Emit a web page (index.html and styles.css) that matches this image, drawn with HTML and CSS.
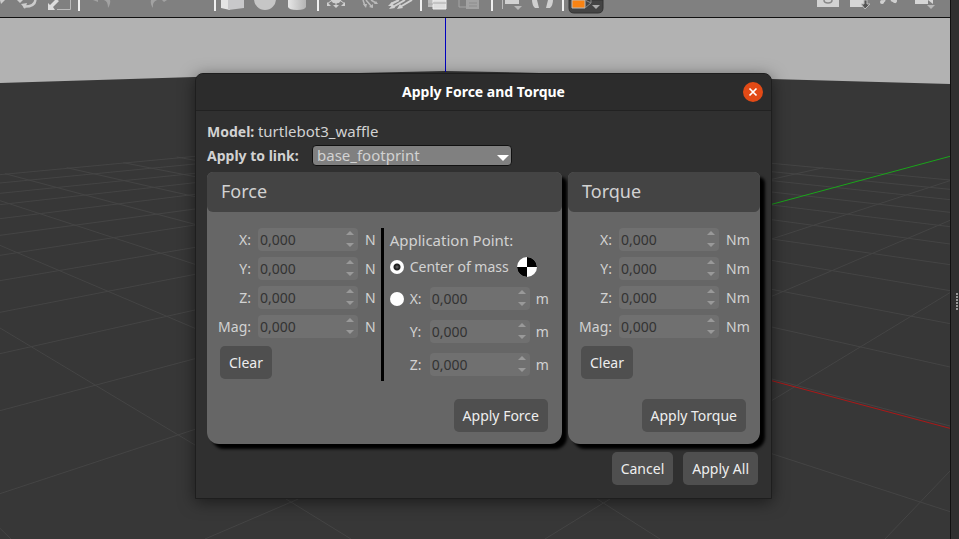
FILE: index.html
```html
<!DOCTYPE html>
<html lang="en">
<head>
<meta charset="utf-8">
<title>Apply Force and Torque</title>
<link rel="stylesheet" href="styles.css">
</head>
<body>
<main class="workspace">
  <div class="toolbar" role="toolbar">
    <div class="group">
      <button class="tool tool-cut" aria-label="Translate"><svg viewBox="0 0 12 17"><path d="M0 0h5l-4 4z" fill="#ccc"/></svg></button>
      <button class="tool" aria-label="Rotate"><svg viewBox="0 0 32 17"><path d="M5 0l3 3 3-3" fill="#ccc"/><path d="M23.500 0q-1 7-12 6.500" fill="none" stroke="#ccc" stroke-width="2.500"/><path d="M9 4l6-1-2 6z" fill="#ccc"/></svg></button>
      <button class="tool" aria-label="Scale"><svg viewBox="0 0 32 17"><path d="M26.500 0v9.500H13" fill="none" stroke="#bbb"/><path d="M4 10V3l2 2 6-6 3 2-6 6 2 3z" fill="#ddd"/></svg></button>
    </div>
    <div class="group history">
      <button class="tool" aria-label="Undo"><svg viewBox="0 0 32 17"><path d="M7 0h5v2zM18 0q4 1 4 8 3-5 2-8z" fill="#a2a2a2"/></svg></button>
      <button class="tool" aria-label="Redo"><svg viewBox="0 0 32 17"><path d="M7 0q-1 4 2 8-1-6 4-8zM18 0h5l-3 2z" fill="#a2a2a2"/></svg></button>
    </div>
    <div class="group">
      <button class="tool" aria-label="Box"><svg viewBox="0 0 32 17"><path d="M4 0h9v10l-9-2z" fill="#e4e4e4"/><path d="M11 0h16v8l-16 2z" fill="#c8c8ca"/></svg></button>
      <button class="tool" aria-label="Sphere"><svg viewBox="0 0 32 17"><circle cx="16" cy="-1" r="11" fill="#c6c6c6"/></svg></button>
      <button class="tool" aria-label="Cylinder"><svg viewBox="0 0 32 17"><defs><linearGradient id="cyl"><stop stop-color="#e6e6e6"/><stop offset="1" stop-color="#b4b4b4"/></linearGradient></defs><path d="M7 0h18v7q-1 3-9 3t-9-3z" fill="url(#cyl)"/></svg></button>
    </div>
    <div class="group">
      <button class="tool" aria-label="Point light"><svg viewBox="0 0 32 17"><g fill="#d0d0d0" stroke="#d0d0d0"><path d="M11 0q1 3 5 3t5-3z"/><path d="M16 2v4M11 1l-4 3M21 1l4 3" fill="none"/><path d="M13 5h6l-3 3zM7 2v4h4zM25 2v4h-4z" stroke="none"/></g></svg></button>
      <button class="tool" aria-label="Spot light"><svg viewBox="0 0 32 17"><path d="M11 0l2 6M14 0l6 7M19 0l5 3" stroke="#bbb" stroke-width="1.500"/><path d="M11 4l3 4 1-4zM17 7l4 1v-4zM22 4l4 0-2-3z" fill="#bbb"/></svg></button>
      <button class="tool" aria-label="Directional light"><svg viewBox="0 0 32 17"><path d="M15 0L7 4M21 0L9 7M28 0L16 7" stroke="#d2d2d2" stroke-width="2"/><path d="M4 6l4-4 1 4zM5 9l4-5 2 4zM13 9l3-5 3 4z" fill="#d2d2d2"/></svg></button>
    </div>
    <div class="group">
      <button class="tool" aria-label="Copy"><svg viewBox="0 0 32 17"><path d="M5 0h14v7H5z" fill="#bbb"/><path d="M10 0h13v9H10z" fill="#ddd" stroke="#eee"/><path d="M10 3h13M5 4h5" stroke="#aaa"/></svg></button>
      <button class="tool" aria-label="Paste"><svg viewBox="0 0 32 17"><path d="M11 7H4V0" fill="none" stroke="#a4a4a4"/><path d="M11 0h13v9H11z" fill="#a2a2a2"/><path d="M14 3h8M14 6h8" stroke="#8c8c8c"/></svg></button>
    </div>
    <div class="group">
      <button class="tool" aria-label="Align"><svg viewBox="0 0 32 17"><path d="M8.500 0v9" stroke="#bbb"/><path d="M11 0h14v4H11z" fill="#d2d2d2"/><path d="M20 6h8l-4 4z" fill="#b8b8b8"/></svg></button>
      <button class="tool" aria-label="Snap"><svg viewBox="0 0 32 17"><path d="M6 0h5l2 8H9q-3-3-3-8zM27 0h-5l-2 8h4q3-3 3-8z" fill="#d0d0d0"/></svg></button>
    </div>
    <div class="group view">
      <button class="tool view-tool" aria-label="View angle"><svg viewBox="0 0 36 17"><path d="M1 0h34v8q0 5-5 5H6q-5 0-5-5z" fill="#444" stroke="#333"/><path d="M4 0h13v8H4z" fill="#f98313" stroke="#bbb"/><path d="M17 8l6-5V0M17 0l6 3" stroke="#888" fill="none"/><path d="M24 5h8l-4 4z" fill="#aaa"/></svg></button>
    </div>
    <div class="group capture">
      <button class="tool" aria-label="Screenshot"><svg viewBox="0 0 32 17"><path d="M5 0h22v7H5z" fill="#d2d2d2"/><path d="M12 0q0 3 4 3t4-3" fill="none" stroke="#888" stroke-width="1.500"/></svg></button>
      <button class="tool" aria-label="Log data"><svg viewBox="0 0 32 17"><path d="M6 0h16v7H6z" fill="#d6d6d6"/><path d="M20 0h3v4h3l-5 5-4-5h3z" fill="#555" stroke="#bbb"/></svg></button>
      <button class="tool" aria-label="Plot"><svg viewBox="0 0 32 17"><path d="M6 3l3-3M15 0l4 2 1-2" stroke="#d0d0d0" stroke-width="2"/><circle cx="6" cy="2" r="2" fill="#d0d0d0"/><circle cx="19" cy="1" r="2" fill="#d0d0d0"/></svg></button>
      <button class="tool" aria-label="Record video"><svg viewBox="0 0 32 17"><path d="M7 0h13v4H7zM20 0h5v4z" fill="#d6d6d6"/><path d="M19 5h8l-4 4z" fill="#b8b8b8"/></svg></button>
    </div>
  </div>

  <div class="stage">
    <svg class="scene" viewBox="0 18 950 521" preserveAspectRatio="none" aria-hidden="true">
      <path d="M0 18H950V84L771 79 520 72.500 445 71 380 72.500 195 77 0 83z" fill="#b2b2b2"/>
      <path d="M445.500 18V72" stroke="#0000c0"/>
      <g transform="translate(0 60) scale(.33333)" stroke="#444" stroke-width="3" fill="none">
        <path d="M0 344L585 289M0 369L585 312M0 400L585 340M0 434L585 368M0 476L585 403M0 526L585 447M0 586L585 495M0 662L585 562M0 757L585 643M0 881L585 750M0 1052L585 896M0 1301L585 1108"/>
        <path d="M530 291L585 301M370 308L585 350M200 323L585 410M15 341L585 493M0 422L585 613M0 556L585 805M0 804L585 1155M0 1405L33 1437"/>
        <path d="M615 1437L895 1317M858 1317L1053 1437M1635 1437L1830 1317M1791 1317L1980 1437"/>
      </g>
      <g transform="translate(760 60) scale(.33333)" stroke="#444" stroke-width="3" fill="none">
        <path d="M35 310L570 360M35 335L570 388M35 362L570 419M35 396L570 457M35 435L570 500M35 479L570 552M35 537L570 614M35 601L570 692M35 688L570 791M35 801L570 921M35 957L570 1098M35 1181L570 1355"/>
        <path d="M35 358L190 323M35 537L570 362M35 709L570 481M35 1022L570 698M375 1437L570 1233"/>
        <path d="M35 433L570 289" stroke="#1aa51a"/>
        <path d="M35 962L570 1105" stroke="#ab1818"/>
      </g>
    </svg>

    <section class="dialog" role="dialog" aria-labelledby="title">
      <header class="titlebar">
        <h1 id="title">Apply Force and Torque</h1>
        <button class="close" aria-label="Close"><svg viewBox="0 0 20 20"><path d="M6.500 6.500l7 7M13.500 6.500l-7 7" stroke="#fff" stroke-width="1.700"/></svg></button>
      </header>
      <div class="content">
        <p class="line"><b>Model:</b> <span class="value">turtlebot3_waffle</span></p>
        <div class="line link-line">
          <label for="link"><b>Apply to link:</b></label>
          <span class="combo"><select id="link"><option>base_footprint</option></select><svg viewBox="0 0 12 6"><path d="M0 0h12L6 6z" fill="#fff"/></svg></span>
        </div>

        <div class="panels">
          <section class="panel force">
            <h2>Force</h2>
            <div class="body">
              <div class="vector">
                <div class="fields">
                  <label for="fx">X:</label><span class="spin"><input id="fx" value="0,000"><svg viewBox="0 0 8 18"><path d="M0 5l4-4 4 4zM0 13h8l-4 4z"/></svg></span><span>N</span>
                  <label for="fy">Y:</label><span class="spin"><input id="fy" value="0,000"><svg viewBox="0 0 8 18"><path d="M0 5l4-4 4 4zM0 13h8l-4 4z"/></svg></span><span>N</span>
                  <label for="fz">Z:</label><span class="spin"><input id="fz" value="0,000"><svg viewBox="0 0 8 18"><path d="M0 5l4-4 4 4zM0 13h8l-4 4z"/></svg></span><span>N</span>
                  <label for="fm">Mag:</label><span class="spin"><input id="fm" value="0,000"><svg viewBox="0 0 8 18"><path d="M0 5l4-4 4 4zM0 13h8l-4 4z"/></svg></span><span>N</span>
                </div>
                <button class="btn clear">Clear</button>
              </div>
              <div class="point">
                <span class="heading">Application Point:</span>
                <input type="radio" name="point" id="com" checked>
                <label class="com" for="com">Center of mass <svg viewBox="0 0 20 20"><circle cx="10" cy="10" r="10" fill="#fff"/><path d="M10 10V0a10 10 0 0 1 10 10zM10 10v10A10 10 0 0 1 0 10z"/></svg></label>
                <input type="radio" name="point" id="custom" aria-label="Custom point">
                <label for="px">X:</label><span class="spin"><input id="px" value="0,000"><svg viewBox="0 0 8 18"><path d="M0 5l4-4 4 4zM0 13h8l-4 4z"/></svg></span><span class="unit">m</span>
                <label class="second" for="py">Y:</label><span class="spin"><input id="py" value="0,000"><svg viewBox="0 0 8 18"><path d="M0 5l4-4 4 4zM0 13h8l-4 4z"/></svg></span><span class="unit">m</span>
                <label class="second" for="pz">Z:</label><span class="spin"><input id="pz" value="0,000"><svg viewBox="0 0 8 18"><path d="M0 5l4-4 4 4zM0 13h8l-4 4z"/></svg></span><span class="unit">m</span>
              </div>
            </div>
            <div class="apply"><button class="btn">Apply Force</button></div>
          </section>

          <section class="panel torque">
            <h2>Torque</h2>
            <div class="body">
              <div class="vector">
                <div class="fields">
                  <label for="tx">X:</label><span class="spin"><input id="tx" value="0,000"><svg viewBox="0 0 8 18"><path d="M0 5l4-4 4 4zM0 13h8l-4 4z"/></svg></span><span>Nm</span>
                  <label for="ty">Y:</label><span class="spin"><input id="ty" value="0,000"><svg viewBox="0 0 8 18"><path d="M0 5l4-4 4 4zM0 13h8l-4 4z"/></svg></span><span>Nm</span>
                  <label for="tz">Z:</label><span class="spin"><input id="tz" value="0,000"><svg viewBox="0 0 8 18"><path d="M0 5l4-4 4 4zM0 13h8l-4 4z"/></svg></span><span>Nm</span>
                  <label for="tm">Mag:</label><span class="spin"><input id="tm" value="0,000"><svg viewBox="0 0 8 18"><path d="M0 5l4-4 4 4zM0 13h8l-4 4z"/></svg></span><span>Nm</span>
                </div>
                <button class="btn clear">Clear</button>
              </div>
            </div>
            <div class="apply"><button class="btn">Apply Torque</button></div>
          </section>
        </div>

        <footer class="actions">
          <button class="btn">Cancel</button>
          <button class="btn">Apply All</button>
        </footer>
      </div>
    </section>
  </div>
</main>
<aside class="splitter"><svg viewBox="0 0 2 17"><path d="M1 0v17" stroke="#999" stroke-width="2" stroke-dasharray="2 1"/></svg></aside>
</body>
</html>
```
FILE: styles.css
```css
* { box-sizing: border-box; }
body {
  margin: 0;
  height: 100vh;
  display: flex;
  overflow: hidden;
  background: #303030;
  color: #d2d2d2;
  font: 14px/20px "Noto Sans", "Open Sans", sans-serif;
}
button, input, select { font: inherit; color: inherit; border: 0; margin: 0; padding: 0; }
h1, h2, p { margin: 0; }
svg { display: block; }

.workspace { flex: 1; display: flex; flex-direction: column; min-width: 0; }
.splitter {
  width: 9px;
  display: flex;
  align-items: center;
  justify-content: flex-end;
  padding: 64px 1px 0 0;
  border-left: 1px solid #111;
  background: #303030;
}
.splitter svg { width: 2px; height: 17px; }

.toolbar { display: flex; height: 18px; background: #808080; border-bottom: 1px solid #111; }
.group { display: flex; padding: 0 6px 0 1px; position: relative; }
.group:first-child { padding: 0 4px 0 0; }
.group:not(:last-child):not(:nth-last-child(2))::after {
  content: "";
  position: absolute;
  right: 0;
  top: 0;
  width: 2px;
  height: 11px;
  background: #f0f0f0;
}
.tool { width: 32px; height: 17px; background: none; }
.tool svg { width: 100%; height: 17px; }
.tool-cut { width: 12px; }
.view-tool { width: 36px; }
.view { padding-left: 4px; }
.history { gap: 26px; padding: 0 40px 0 6px; }
.capture { margin-left: auto; padding-right: 10px; }

.stage { flex: 1; position: relative; min-height: 0; background: #373737; }
.scene { width: 100%; height: 100%; }

.dialog {
  position: absolute;
  left: 195px;
  top: 55px;
  background: #303030;
  border: 1px solid #1e1e1e;
  border-radius: 8px 8px 0 0;
  box-shadow: 0 3px 16px rgba(0, 0, 0, .5);
}
.titlebar {
  display: flex;
  align-items: center;
  height: 37px;
  padding: 0 8px 0 28px;
  background: #2c2c2c;
  border-bottom: 1px solid #222;
  border-radius: 8px 8px 0 0;
}
.titlebar h1 { flex: 1; text-align: center; font-size: 14px; line-height: 20px; color: #fff; }
.close { width: 20px; height: 20px; border-radius: 50%; background: #e24a16; }

.content { padding: 10px 11px 13px; }
.line { height: 20px; }
.value, .combo select, .point .heading { font-size: 15px; }
.link-line { display: flex; align-items: center; height: 21px; margin: 4px 0 6px; }
.link-line label { width: 105px; }
.combo { display: flex; align-items: center; position: relative; width: 200px; }
.combo select {
  appearance: none;
  width: 100%;
  height: 21px;
  padding: 0 4px;
  line-height: 19px;
  background: #808080;
  border: 1px solid #111;
  border-radius: 4px;
}
.combo svg { position: absolute; right: 3px; top: 10px; width: 12px; height: 6px; pointer-events: none; }

.panels { display: flex; gap: 6px; }
.panel {
  display: flex;
  flex-direction: column;
  padding-bottom: 12px;
  background: #666;
  border-radius: 6px 6px 12px 12px;
  box-shadow: 5px 5px 3px #000;
}
.force { width: 355px; z-index: 0; }
.torque { width: 192px; z-index: 1; }
.panel h2 {
  height: 40px;
  padding-left: 14px;
  background: #444;
  border-radius: 6px;
  font-size: 18px;
  font-weight: 400;
  line-height: 39px;
}
.body { display: flex; padding: 16px 8px 0; }
.fields { display: grid; grid-template-columns: 36px 100px auto; gap: 6px 7px; align-items: center; }
.fields label { text-align: right; }
.spin { display: block; position: relative; }
.spin input {
  display: block;
  width: 100%;
  height: 23px;
  padding: 0 20px 0 2px;
  background: #707070;
  border-radius: 4px;
  color: #333;
}
.spin svg { position: absolute; right: 4px; top: 2px; width: 8px; height: 18px; fill: #999; }

.btn { height: 33px; padding: 0 9px; background: #4f4f4f; border-radius: 5px; color: #eee; }
.clear { margin: 8px 0 0 5px; }
.point {
  display: grid;
  grid-template-columns: 20px 20px 100px auto;
  grid-template-rows: 24px 30px 33px 33px 33px;
  align-items: center;
  margin-left: 5px;
  padding-left: 6px;
  border-left: 3px solid #000;
}
.point .unit { padding-left: 6px; }
.point .heading { grid-column: 1 / -1; }
.point .second { grid-column: 2; }
.com { grid-column: 2 / -1; display: flex; align-items: center; gap: 8px; }
.com svg { width: 20px; height: 20px; }
.point input[type="radio"] {
  appearance: none;
  width: 14px;
  height: 14px;
  border-radius: 50%;
  background: #fff;
}
.point input[type="radio"]:checked { background: radial-gradient(circle, #555 1px, #222 2px, #222 3px, #fff 4px); }
.apply { display: flex; justify-content: flex-end; margin-top: auto; padding: 18px 14px 0 0; }
.actions { display: flex; justify-content: flex-end; gap: 10px; margin-top: 8px; padding-right: 2px; }
```
